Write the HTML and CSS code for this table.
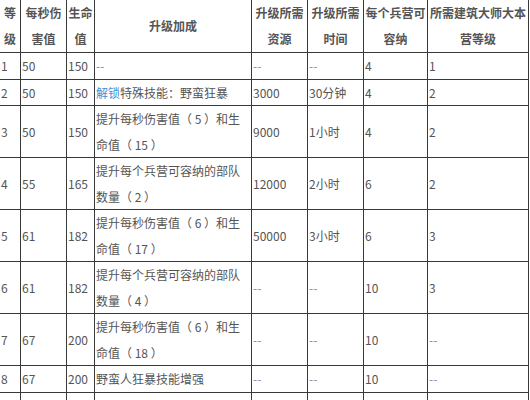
FILE: index.html
```html
<!DOCTYPE html>
<html lang="zh">
<head>
<meta charset="utf-8">
<title>野蛮人升级表</title>
<link rel="stylesheet" href="styles.css">
</head>
<body>
<table class="upgrade-table">
  <colgroup>
    <col class="c-level">
    <col class="c-dps">
    <col class="c-hp">
    <col class="c-bonus">
    <col class="c-cost">
    <col class="c-time">
    <col class="c-cap">
    <col class="c-hall">
  </colgroup>
  <thead>
    <tr>
      <th>等级</th>
      <th>每秒伤害值</th>
      <th>生命值</th>
      <th>升级加成</th>
      <th>升级所需资源</th>
      <th>升级所需时间</th>
      <th>每个兵营可容纳</th>
      <th>所需建筑大师大本营等级</th>
    </tr>
  </thead>
  <tbody>
    <tr><td>1</td><td>50</td><td>150</td><td class="dash">--</td><td class="dash">--</td><td class="dash">--</td><td>4</td><td>1</td></tr>
    <tr><td>2</td><td>50</td><td>150</td><td><span class="link">解锁</span>特殊技能：野蛮狂暴</td><td>3000</td><td>30分钟</td><td>4</td><td>2</td></tr>
    <tr><td>3</td><td>50</td><td>150</td><td>提升每秒伤害值（ 5 ）和生命值（ 15 ）</td><td>9000</td><td>1小时</td><td>4</td><td>2</td></tr>
    <tr><td>4</td><td>55</td><td>165</td><td>提升每个兵营可容纳的部队数量（ 2 ）</td><td>12000</td><td>2小时</td><td>6</td><td>2</td></tr>
    <tr><td>5</td><td>61</td><td>182</td><td>提升每秒伤害值（ 6 ）和生命值（ 17 ）</td><td>50000</td><td>3小时</td><td>6</td><td>3</td></tr>
    <tr><td>6</td><td>61</td><td>182</td><td>提升每个兵营可容纳的部队数量（ 4 ）</td><td class="dash">--</td><td class="dash">--</td><td>10</td><td>3</td></tr>
    <tr><td>7</td><td>67</td><td>200</td><td>提升每秒伤害值（ 6 ）和生命值（ 18 ）</td><td class="dash">--</td><td class="dash">--</td><td>10</td><td class="dash">--</td></tr>
    <tr><td>8</td><td>67</td><td>200</td><td>野蛮人狂暴技能增强</td><td class="dash">--</td><td class="dash">--</td><td>10</td><td class="dash">--</td></tr>
    <tr class="row-empty"><td></td><td></td><td></td><td></td><td></td><td></td><td></td><td></td></tr>
  </tbody>
</table>
</body>
</html>
```

FILE: styles.css
```css
html, body {
  margin: 0;
  padding: 0;
  background: #ffffff;
}

body {
  font-family: "Noto Sans CJK SC", "Noto Sans", sans-serif;
  font-size: 12px;
  color: #555555;
  text-spacing-trim: space-all;
}

.upgrade-table {
  border-collapse: collapse;
  table-layout: fixed;
  width: 530px;
  margin: -1px 0 0 -1px;
}

.c-level { width: 21px; }
.c-dps { width: 46px; }
.c-hp { width: 28px; }
.c-bonus { width: 157px; }
.c-cost { width: 56px; }
.c-time { width: 56px; }
.c-cap { width: 64px; }
.c-hall { width: 101px; }

.upgrade-table th,
.upgrade-table td {
  border: 1px solid #3a3a3a;
  padding: 0 1px;
  vertical-align: middle;
  word-break: break-all;
}

.upgrade-table th {
  font-weight: bold;
  color: #555555;
  text-align: center;
  line-height: 26px;
  padding: 0;
}

.upgrade-table td {
  text-align: left;
  line-height: 25.5px;
  color: #555555;
}

.upgrade-table .row-empty td {
  height: 26px;
}

.upgrade-table .dash {
  color: #8a8a8a;
}

.link {
  color: #3d8fd6;
}
```
